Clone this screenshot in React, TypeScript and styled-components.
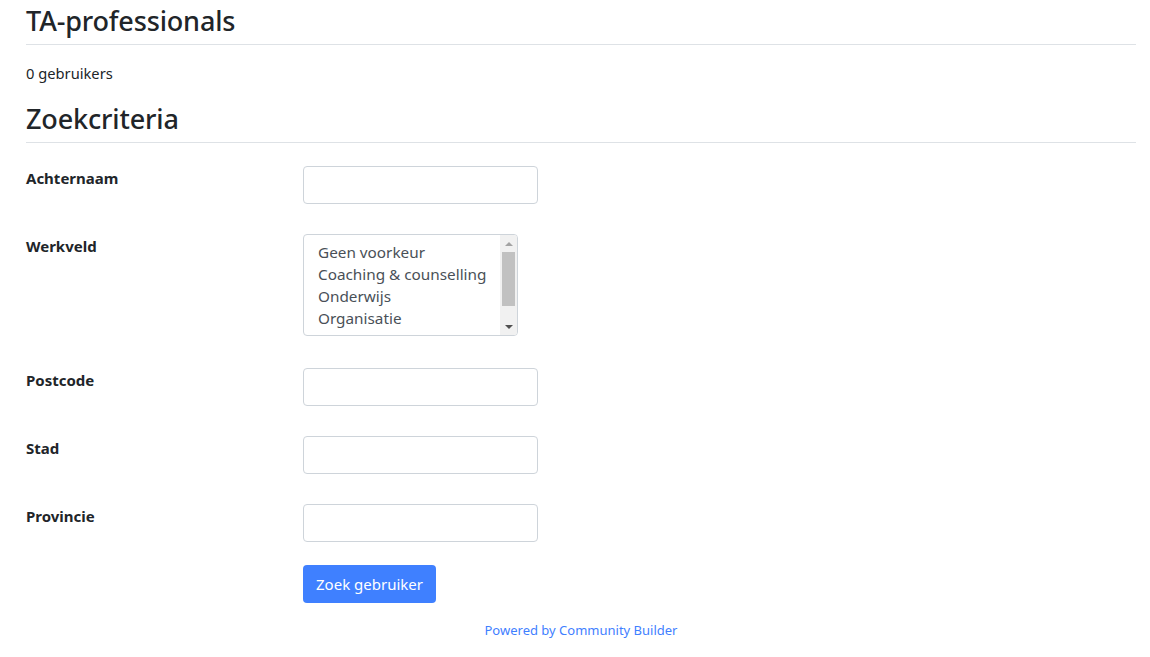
import React from "react";
import styled, { createGlobalStyle } from "styled-components";

const Global = createGlobalStyle`
  html, body { margin: 0; padding: 0; background: #fff; }
  body {
    font-family: "Noto Sans", "Open Sans", sans-serif;
    font-size: 16px;
    color: #212529;
  }
  * { box-sizing: border-box; }
`;

const Page = styled.div`
  width: 1110px;
  margin-left: 26px;
  padding-top: 4px;
`;

const Heading = styled.h3<{ $top?: number }>`
  margin: ${(p) => p.$top ?? 0}px 0 0;
  font-size: 27px;
  letter-spacing: -0.15px;
  font-weight: 500;
  line-height: 34px;
  padding-bottom: 6px;
  border-bottom: 1px solid #dee2e6;
`;

const Count = styled.div`
  margin-top: 17px;
  font-size: 14.7px;
  line-height: 22px;
`;

const Form = styled.form`
  margin-top: 23px;
  display: flex;
  flex-direction: column;
`;

const Row = styled.div<{ $gap?: number }>`
  display: grid;
  grid-template-columns: 277px 1fr;
  margin-bottom: ${(p) => p.$gap ?? 30}px;
`;

const Label = styled.label`
  font-weight: 700;
  font-size: 15px;
  line-height: 22px;
  padding-top: 1px;
`;

const Input = styled.input`
  width: 235px;
  height: 38px;
  border: 1px solid #ced4da;
  border-radius: 4px;
  font: inherit;
  padding: 6px 12px;
  color: #495057;
  background: #fff;
`;

const ListBox = styled.div`
  width: 215px;
  height: 102px;
  border: 1px solid #ced4da;
  border-radius: 4px;
  display: flex;
  overflow: hidden;
`;

const Options = styled.div`
  flex: 1;
  padding: 6px 14px;
  color: #495057;
  font-size: 15.3px;
  line-height: 22px;
  overflow: hidden;
  white-space: nowrap;
`;

const ScrollBar = styled.div`
  width: 17px;
  background: #f1f1f1;
  display: flex;
  flex-direction: column;
  align-items: center;
  padding: 0 2px;
`;

const Spacer = styled.div`
  flex: 1;
`;

const Arrow = styled.div<{ $down?: boolean }>`
  height: 17px;
  width: 100%;
  display: flex;
  align-items: center;
  justify-content: center;
  &::after {
    content: "";
    border-left: 4px solid transparent;
    border-right: 4px solid transparent;
    ${(p) =>
      p.$down
        ? "border-top: 4px solid #505050;"
        : "border-bottom: 4px solid #a3a3a3;"}
  }
`;

const Thumb = styled.div`
  width: 13px;
  height: 54px;
  background: #c1c1c1;
`;

const Button = styled.button`
  width: 133px;
  height: 38px;
  border: none;
  border-radius: 4px;
  background: #3f80ff;
  color: #fff;
  font: inherit;
  font-size: 15px;
  padding: 0;
`;

const Footer = styled.div`
  margin-top: 18px;
  text-align: center;
  font-size: 13px;
  line-height: 18px;
  color: #3f80ff;
  width: 1110px;
`;

const options = ["Geen voorkeur", "Coaching & counselling", "Onderwijs", "Organisatie", "Psychotherapie"];

export default function App() {
  return (
    <>
      <Global />
      <Page>
        <Heading>TA-professionals</Heading>
        <Count>0 gebruikers</Count>
        <Heading $top={18}>Zoekcriteria</Heading>
        <Form>
          <Row>
            <Label>Achternaam</Label>
            <div><Input /></div>
          </Row>
          <Row $gap={32}>
            <Label>Werkveld</Label>
            <div>
              <ListBox>
                <Options>
                  {options.map((o) => (
                    <div key={o}>{o}</div>
                  ))}
                </Options>
                <ScrollBar>
                  <Arrow />
                  <Thumb />
                  <Spacer />
                  <Arrow $down />
                </ScrollBar>
              </ListBox>
            </div>
          </Row>
          <Row>
            <Label>Postcode</Label>
            <div><Input /></div>
          </Row>
          <Row>
            <Label>Stad</Label>
            <div><Input /></div>
          </Row>
          <Row $gap={23}>
            <Label>Provincie</Label>
            <div><Input /></div>
          </Row>
          <Row $gap={0}>
            <div />
            <div><Button type="button">Zoek gebruiker</Button></div>
          </Row>
        </Form>
        <Footer>Powered by Community Builder</Footer>
      </Page>
    </>
  );
}
